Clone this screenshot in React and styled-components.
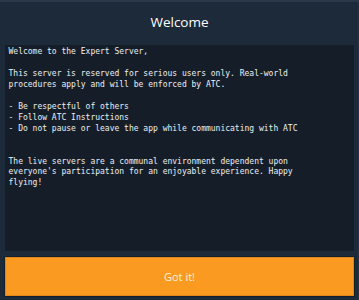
import React from "react";
import styled, { createGlobalStyle } from "styled-components";

const Global = createGlobalStyle`
  html, body { margin: 0; padding: 0; background: #1c2a39; }
  #root { width: 359px; height: 300px; }
`;

const Frame = styled.div`
  width: 359px;
  height: 300px;
  box-sizing: border-box;
  background: #1c2a39;
  border-top: 2px solid #2a3949;
  border-right: 1px solid #243445;
  display: flex;
  flex-direction: column;
  padding: 0 4px 4px 5px;
`;

const Header = styled.div`
  height: 43px;
  display: flex;
  align-items: center;
  justify-content: center;
  font-family: "Open Sans", "Noto Sans", sans-serif;
  font-size: 13.5px;
  color: #ffffff;
  padding-bottom: 4px;
  box-sizing: border-box;
`;

const Message = styled.div`
  height: 206px;
  box-sizing: border-box;
  background: #151e28;
  padding: 2px 3px 2px 3.5px;
  font-family: "DejaVu Sans Mono", "Liberation Mono", monospace;
  font-size: 8px;
  line-height: 10.95px;
  color: #eef1f4;
  white-space: pre-wrap;
  overflow: hidden;
`;

const Button = styled.button`
  margin-top: 6px;
  height: 39px;
  width: 100%;
  box-sizing: border-box;
  background: #fb9a21;
  border: 1px solid #e0871a;
  outline: 1px solid #12202e;
  color: #fdf1dc;
  font-family: "Open Sans", "Noto Sans", sans-serif;
  font-size: 11px;
  cursor: pointer;
  padding: 0;
`;

const text = `Welcome to the Expert Server,

This server is reserved for serious users only. Real-world
procedures apply and will be enforced by ATC.

- Be respectful of others
- Follow ATC Instructions
- Do not pause or leave the app while communicating with ATC


The live servers are a communal environment dependent upon
everyone's participation for an enjoyable experience. Happy
flying!`;

export default function App() {
  return (
    <>
      <Global />
      <Frame>
        <Header>Welcome</Header>
        <Message>{text}</Message>
        <Button>Got it!</Button>
      </Frame>
    </>
  );
}
